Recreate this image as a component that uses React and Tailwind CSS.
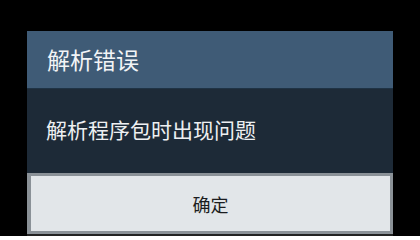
export default function App() {
  return (
    <div className="w-[420px] h-[236px] bg-black overflow-hidden font-['Noto_Sans_CJK_SC',sans-serif]">
      <div className="ml-[27px] mt-[31px] w-[366px] bg-[#1d2a37]">
        {/* Title */}
        <div className="h-[58px] bg-[#3f5b76] border-b border-[#1f3345] flex items-center pl-[20px]">
          <span className="text-[23px] leading-none text-[#f2f4f6]">解析错误</span>
        </div>
        {/* Message */}
        <div className="h-[84px] flex items-center pl-[19px] pb-[3px]">
          <span className="text-[21px] leading-none text-[#eef0f2]">解析程序包时出现问题</span>
        </div>
        {/* Button */}
        <div className="bg-[#8a9197] p-[3px] pl-[4px] pb-[3px]">
          <button className="w-full h-[55px] bg-[#e2e6e9] flex items-center justify-center">
            <span className="text-[18px] leading-none text-[#1b1d20]">确定</span>
          </button>
        </div>
        <div className="h-[2px] bg-[#222]" />
      </div>
    </div>
  );
}
